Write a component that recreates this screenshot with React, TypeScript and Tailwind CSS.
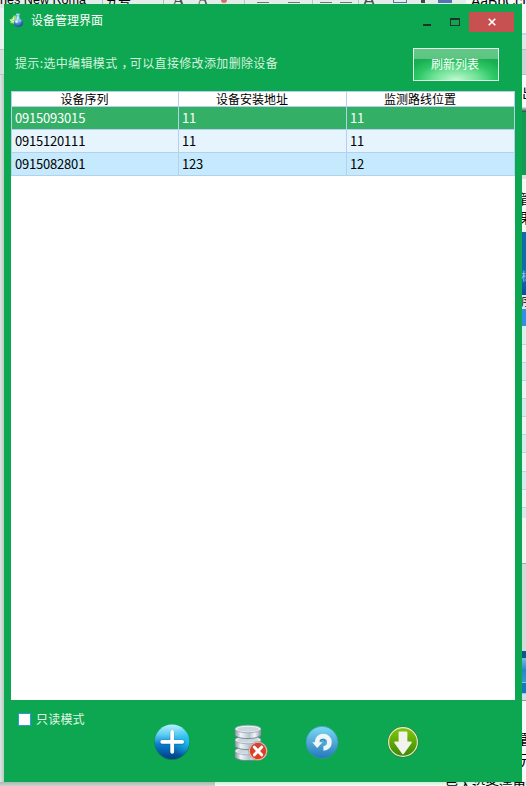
import type { ReactNode } from "react";

const CJK = "font-['Noto_Sans_CJK_SC',sans-serif]";

const columns = ["设备序列", "设备安装地址", "监测路线位置"];

const rows = [
  { cells: ["0915093015", "11", "11"], tone: "bg-[#34b066] text-white" },
  { cells: ["0915120111", "11", "11"], tone: "bg-[#e6f5fd] text-black" },
  { cells: ["0915082801", "123", "12"], tone: "bg-[#c6eafd] text-black" },
];

/* Formatting toolbar of the document window behind */
function ToolbarEdge() {
  const dash = "mt-0.5 h-px w-3 shrink-0 bg-[#6c7774]";
  return (
    <div className="flex h-1 items-start overflow-hidden bg-[#e3eeea] text-black">
      <div className="flex h-1 w-[102px] shrink-0 items-end font-['Liberation_Sans',sans-serif] text-[12.6px] leading-[7px] whitespace-nowrap">nes New Roma</div>
      <div className="flex h-1 w-[62px] shrink-0 items-end border-x border-[#aebdb8] pl-0.5 text-[13px] leading-[8px]">五号</div>
      <div className="flex h-1 w-20 shrink-0 items-end gap-3 pl-2 font-['Liberation_Serif',serif] text-[18px] leading-[8px] text-[#46504d]">
        <span>A</span>
        <span className="text-[16px]">A</span>
        <span className="mb-px h-[3px] w-1.5 rounded-b bg-[#d36f6b]" />
      </div>
      <div className="flex h-1 w-[69px] shrink-0 gap-[19px] border-x border-[#b8c6c1] pl-3">
        <span className={dash} />
        <span className={dash} />
      </div>
      <div className="flex h-1 w-[45px] shrink-0 gap-2 pl-[7px]">
        <span className={dash} />
        <span className={dash} />
      </div>
      <div className="flex h-1 w-[108px] shrink-0 items-end border-l border-[#b8c6c1] pl-1 font-['Liberation_Sans',sans-serif] text-[18px] leading-[8px] text-[#46504d]">
        A
        <span className="mb-px ml-[18px] h-[3px] w-[14px] border-x border-b border-[#58769d]" />
        <span className="mb-px ml-[14px] h-[3px] w-1 bg-[#3e4845]" />
        <span className="mb-px ml-[13px] h-[3px] w-[14px] bg-[#5674b2]" />
      </div>
      <div className="flex h-1 grow items-start bg-[#f6faf9] pl-[5px] font-['Liberation_Sans',sans-serif] text-[14px] leading-[3px] whitespace-nowrap">AaBbCcD</div>
    </div>
  );
}

function LeftEdge() {
  return (
    <div className="flex w-1 shrink-0 flex-col">
      <div className="h-1 bg-[#dbe7e3]" />
      <div className="h-[41px] bg-[#e8f2ef]" />
      <div className="h-[26px] border-y border-[#b7c4c0] bg-[#d2dfdb]" />
      <div className="grow bg-linear-to-r from-[#dce6e3] to-[#b9c9c2]" />
    </div>
  );
}

type Slice = { tone: string; text?: string; type?: string };

const slices: Slice[] = [
  { tone: "h-[29px] bg-[#f4f8f7]" },
  { tone: "h-[2px] bg-[#bcd9ea]" },
  { tone: "h-[14px] bg-[#dfe8e5]" },
  { tone: "h-[26px] border-y border-[#b3bfbc] bg-[#ccd5d3]" },
  { tone: "h-[32px] bg-[#f6faf8] pt-[9px]", text: "出", type: "-mr-2.5 text-[14px] leading-4 text-black" },
  { tone: "h-[5px] bg-linear-to-b from-[#dfe9e4] to-[#26513a]" },
  { tone: "h-[63px] bg-[#159a56]" },
  { tone: "h-[4px] bg-[#d9e5df]" },
  { tone: "h-[53px] bg-[#f2faf6] pt-[10px]", text: "管果", type: "-mr-[7px] text-[14px] leading-[19px] text-black" },
  { tone: "h-[38px] bg-[#0f6cac]" },
  { tone: "h-[25px] bg-linear-to-b from-[#1874b5] to-[#0750a0]", text: "标", type: "-mr-1.5 text-[11px] leading-3 text-[#8fc3e6]" },
  { tone: "h-[14px] bg-[#dce9e8]", text: "序", type: "-mr-1.5 text-[11px] leading-[13px] text-black" },
  { tone: "h-[17px] bg-[#3190e6]" },
  { tone: "h-[19px] border-b border-[#b5d9e0] bg-[#d9f2ee]" },
  { tone: "h-[18px] border-b border-[#b5d9e0] bg-[#e8f7f3]" },
  { tone: "h-[18px] border-b border-[#b5d9e0] bg-[#d3ecee]" },
  { tone: "h-[18px] border-b border-[#b5d9e0] bg-[#e8f7f3]" },
  { tone: "h-[18px] border-b border-[#b5d9e0] bg-[#d3ecee]" },
  { tone: "h-[18px] border-b border-[#b5d9e0] bg-[#e8f7f3]" },
  { tone: "h-[18px] border-b border-[#b5d9e0] bg-[#d3ecee]" },
  { tone: "h-[19px] border-b border-[#b5d9e0] bg-[#e8f7f3]" },
  { tone: "h-[18px] border-b border-[#b5d9e0] bg-[#d3ecee]" },
  { tone: "h-[18px] border-b border-[#b5d9e0] bg-[#e8f7f3]" },
  { tone: "h-[10px] bg-[#d3ecee]" },
  { tone: "h-[45px] bg-[#eff9f3]" },
  { tone: "h-[1px] bg-[#9eaea8]" },
  { tone: "h-[87px] bg-[#d0dedb]" },
  { tone: "h-[7px] bg-[#0a5789]" },
  { tone: "h-[24px] bg-linear-to-b from-[#79bbdc] via-[#2388c9] to-[#3599d4]" },
  { tone: "h-[12px] border-y border-[#8cc6e4] bg-[#1478bd]" },
  { tone: "h-[7px] border-b border-[#8c9c9c] bg-[#d2dfe5]" },
  { tone: "grow bg-[#f2fbf6] pt-[27px]", text: "置元", type: "-mr-2 text-[15px] leading-[21px] text-black" },
];

function RightEdge() {
  return (
    <div className="flex h-[778px] w-1 shrink-0 flex-col overflow-hidden">
      {slices.map(({ tone, text, type }, i) => (
        <div key={i} className={`flex shrink-0 flex-col items-end overflow-hidden ${tone}`}>
          {text && [...text].map((ch) => (
            <span key={ch} className={type}>{ch}</span>
          ))}
        </div>
      ))}
    </div>
  );
}

function BottomEdge() {
  return (
    <div className="flex h-1">
      <div className="w-[215px] bg-linear-to-b from-[#a9b8b1] to-[#cbd2cf]" />
      <div className="flex grow items-start justify-end overflow-hidden bg-linear-to-b from-[#c9eedb] to-[#f6fcf9] text-[13.5px] leading-[6px] whitespace-nowrap text-black">导入设备清单</div>
    </div>
  );
}

function AppIcon() {
  return (
    <svg className="size-[15px]" viewBox="0 0 15 15">
      <defs>
        <radialGradient id="flask" cx=".4" cy=".3" r=".75">
          <stop offset="0" stopColor="#d9f4ff" />
          <stop offset=".4" stopColor="#6fb4ea" />
          <stop offset="1" stopColor="#173f97" />
        </radialGradient>
      </defs>
      <path d="M4.5 2.6 3.7 5.2.4 6.6l1.3 1.8L1.3 10l3 .5L6 12l2.5-3L7 2.5Z" fill="#9edb72" />
      <path d="m4 4 .8 2.5-3.3 1M2.5 9l2.5-.5" stroke="#e8f9cf" fill="none" />
      <path d="M7.4 1h3v4.4C12.8 6 14.2 7.4 14.2 9.6c0 2.8-2 4.3-4.7 4.3-2.9 0-4.6-1.6-4.6-4 0-2 1.2-3.8 2.8-4.4Z" fill="url(#flask)" />
      <path d="M7 1.2h3.8" stroke="#c6e6fa" />
      <circle cx="7.5" cy="8.6" r="1.4" fill="#e5fbff" opacity=".9" />
      <circle cx="11" cy="8" r=".8" fill="#e5fbff" opacity=".7" />
    </svg>
  );
}

function AddIcon() {
  return (
    <svg className="size-[36px]" viewBox="0 0 36 36">
      <defs>
        <linearGradient id="add" x2="0" y2="1">
          <stop offset="0" stopColor="#b8f1ff" />
          <stop offset=".3" stopColor="#5ccdf2" />
          <stop offset=".58" stopColor="#0a7cca" />
          <stop offset="1" stopColor="#003d87" />
        </linearGradient>
        <radialGradient id="addGlow" cx=".98" cy=".5" r=".5">
          <stop offset="0" stopColor="#23c6f2" stopOpacity=".8" />
          <stop offset="1" stopColor="#23c6f2" stopOpacity="0" />
        </radialGradient>
      </defs>
      <circle cx="18" cy="18.5" r="17.5" fill="#075c68" opacity=".65" />
      <circle cx="18" cy="17.7" r="17.3" fill="url(#add)" />
      <circle cx="18" cy="17.7" r="17.3" fill="url(#addGlow)" />
      <path d="M18.2 8.4v19.4M8.2 18.2h20" stroke="#064a87" strokeWidth="5" strokeLinecap="round" opacity=".3" />
      <path d="M18.2 8v19.8M8.2 17.8h20" stroke="white" strokeWidth="3.8" strokeLinecap="round" />
    </svg>
  );
}

function DeleteDatabaseIcon() {
  return (
    <svg className="h-[37px] w-[34px]" viewBox="0 0 34 37">
      <defs>
        <linearGradient id="disk">
          <stop offset="0" stopColor="#8797a3" />
          <stop offset=".22" stopColor="#f2f5f8" />
          <stop offset=".55" stopColor="#b7c4ce" />
          <stop offset=".76" stopColor="#f3f6f8" />
          <stop offset="1" stopColor="#8797a3" />
        </linearGradient>
        <linearGradient id="red" x2="0" y2="1">
          <stop stopColor="#c94b3f" />
          <stop offset="1" stopColor="#ed3613" />
        </linearGradient>
      </defs>
      {[24, 13, 2].map((y) => (
        <g key={y} transform={`translate(0 ${y})`}>
          <path d="M1 3v6c0 5 26 5 26 0V3" fill="url(#disk)" stroke="#71848c" strokeWidth=".4" />
          <path d="M2 10.2c5 3.2 19 3.2 24-.4" stroke="#3f5c6b" fill="none" opacity=".45" />
          <ellipse cx="14" cy="3" rx="13" ry="3.8" fill="#eef2f4" stroke="#8b9ba6" strokeWidth=".7" />
          <ellipse cx="14" cy="3.2" rx="11" ry="2.5" fill="#cbd6de" />
        </g>
      ))}
      <circle cx="24" cy="27" r="9.3" fill="#f3cfc3" stroke="#8d8b85" strokeWidth=".6" />
      <circle cx="24" cy="27" r="8.2" fill="url(#red)" />
      <path d="m20.4 23.2 7.2 7.6m0-7.6-7.2 7.6" stroke="white" strokeWidth="3" strokeLinecap="round" />
    </svg>
  );
}

function UndoIcon() {
  return (
    <svg className="size-[34px]" viewBox="0 0 34 34">
      <defs>
        <linearGradient id="undo" x2="0" y2="1">
          <stop stopColor="#7cdbf3" />
          <stop offset="1" stopColor="#2477bb" />
        </linearGradient>
      </defs>
      <circle cx="17" cy="17.3" r="16" fill="url(#undo)" stroke="#3991b9" strokeWidth=".6" />
      <path d="M12.2 18v-1.2c0-7.6 12.2-7.4 12.2.4 0 3.7-2.6 6.2-6 6.2" fill="none" stroke="#f1f5f7" strokeWidth="4.8" />
      <path d="M7.2 17.2h10.4l-5.4 5.8Z" fill="#f1f5f7" />
      <path d="M15 16.2c.6-2.2 4.4-2.2 5.2 0" fill="none" stroke="#2b80ac" strokeWidth="1.1" />
    </svg>
  );
}

function DownloadIcon() {
  return (
    <svg className="size-8" viewBox="0 0 32 32">
      <defs>
        <linearGradient id="down" x2="0" y2="1">
          <stop stopColor="#83c80a" />
          <stop offset="1" stopColor="#3b8704" />
        </linearGradient>
      </defs>
      <circle cx="16" cy="16" r="15.5" fill="#47751d" />
      <circle cx="16" cy="16" r="14.4" fill="url(#down)" stroke="#e6eddc" strokeWidth="1.1" />
      <path d="M11.6 6.6q0-1.1 1-1.1h6.8q1 0 1 1.1v9H24q1.4.2.6 1.5l-7.7 10.6q-.9 1-1.8 0L7.4 17.1q-.8-1.3.6-1.5h3.6Z" fill="#f2f3ee" />
    </svg>
  );
}

function IconButton({ label, children }: { label: string; children: ReactNode }) {
  return (
    <button aria-label={label} className="flex h-9 items-center">
      {children}
    </button>
  );
}

function DeviceWindow() {
  return (
    <main className="flex h-[778px] w-[518px] shrink-0 flex-col bg-[#0ca750] px-[7px]">
      <header className="flex h-[35px] shrink-0 justify-between pt-[7px]">
        <div className="-ml-0.5 flex h-[18px] items-center gap-[7px]">
          <AppIcon />
          <h1 className="text-[12px] leading-[18px] text-white">设备管理界面</h1>
        </div>
        <div className="flex pt-px pr-px">
          <button aria-label="最小化" className="flex h-5 w-7 justify-center pt-3"><span className="h-0.5 w-2 bg-[#25302a]" /></button>
          <button aria-label="最大化" className="flex h-5 w-7 justify-center pt-1.5"><span className="h-2 w-2.5 border border-t-2 border-[#25302a]" /></button>
          <button aria-label="关闭" className="flex h-5 w-[45px] items-center justify-center bg-[#c75050]">
            <svg className="size-2" viewBox="0 0 8 8"><path d="m.7.7 6.6 6.6m0-6.6L.7 7.3" stroke="white" strokeWidth="1.6" /></svg>
          </button>
        </div>
      </header>
      <section className="flex h-[52px] shrink-0 items-start justify-between pt-[9px] pr-4 pl-1">
        <p className="flex pt-1.5 text-[12px] leading-[18px] tracking-[0.35px] whitespace-nowrap text-[#d5f3df]">
          提示:选中编辑模式<span className="w-[12.35px] overflow-hidden pl-1">，</span>可以直接修改添加删除设备
        </p>
        <button className="h-[33px] w-[86px] border border-[#e0f7e7] bg-[radial-gradient(ellipse_48px_22px_at_50%_100%,#c4f8d2_0%,#6be094_50%,#2fc866_80%,#17ad50_115%)] text-[12px] text-white">
          <span className="flex h-full flex-col bg-[linear-gradient(to_bottom,#64c788_0,#5cc582_10px,transparent_10px)] pt-1.5 pr-0.5 leading-[18px]">刷新列表</span>
        </button>
      </section>
      <section className="h-[609px] w-[504px] shrink-0 bg-white">
        <table className="w-[504px] table-fixed border-separate border-spacing-0 border-t border-l border-[#b5d0ec]">
          <colgroup><col className="w-[167px]" /><col className="w-[168px]" /><col className="w-[168px]" /></colgroup>
          <thead>
            <tr className="h-[15px]">
              {columns.map((title) => (
                <th key={title} className="h-[15px] border-r border-b border-[#b5d0ec] p-0 pr-[21px] text-center text-[12px] leading-[14px] font-normal text-black">{title}</th>
              ))}
            </tr>
          </thead>
          <tbody>
            {rows.map((row) => (
              <tr key={row.cells[0]} className={row.tone}>
                {row.cells.map((cell, i) => (
                  <td key={i} className="h-[23px] border-r border-b border-[#b5d0ec] p-0 pl-[3px] text-[13px] leading-[22px] tracking-[-0.2px]">{cell}</td>
                ))}
              </tr>
            ))}
          </tbody>
        </table>
      </section>
      <footer className="flex h-[82px] items-start">
        <label className="flex w-[143px] shrink-0 items-center gap-[5px] pt-2.5 pl-[7px] text-[12px] leading-[18px] tracking-[0.2px] whitespace-nowrap text-[#e0f6e7]">
          <span className="size-[13px] border border-[#3199d9] bg-white" />
          只读模式
        </label>
        <div className="grid grid-cols-[80px_71px_82px_32px] pt-6">
          <IconButton label="添加"><AddIcon /></IconButton>
          <IconButton label="删除"><DeleteDatabaseIcon /></IconButton>
          <IconButton label="撤销"><UndoIcon /></IconButton>
          <IconButton label="下载"><DownloadIcon /></IconButton>
        </div>
      </footer>
    </main>
  );
}

export default function App() {
  return (
    <div className={`flex h-[786px] w-[526px] flex-col overflow-hidden ${CJK}`}>
      <ToolbarEdge />
      <div className="flex h-[778px] shrink-0">
        <LeftEdge />
        <DeviceWindow />
        <RightEdge />
      </div>
      <BottomEdge />
    </div>
  );
}
